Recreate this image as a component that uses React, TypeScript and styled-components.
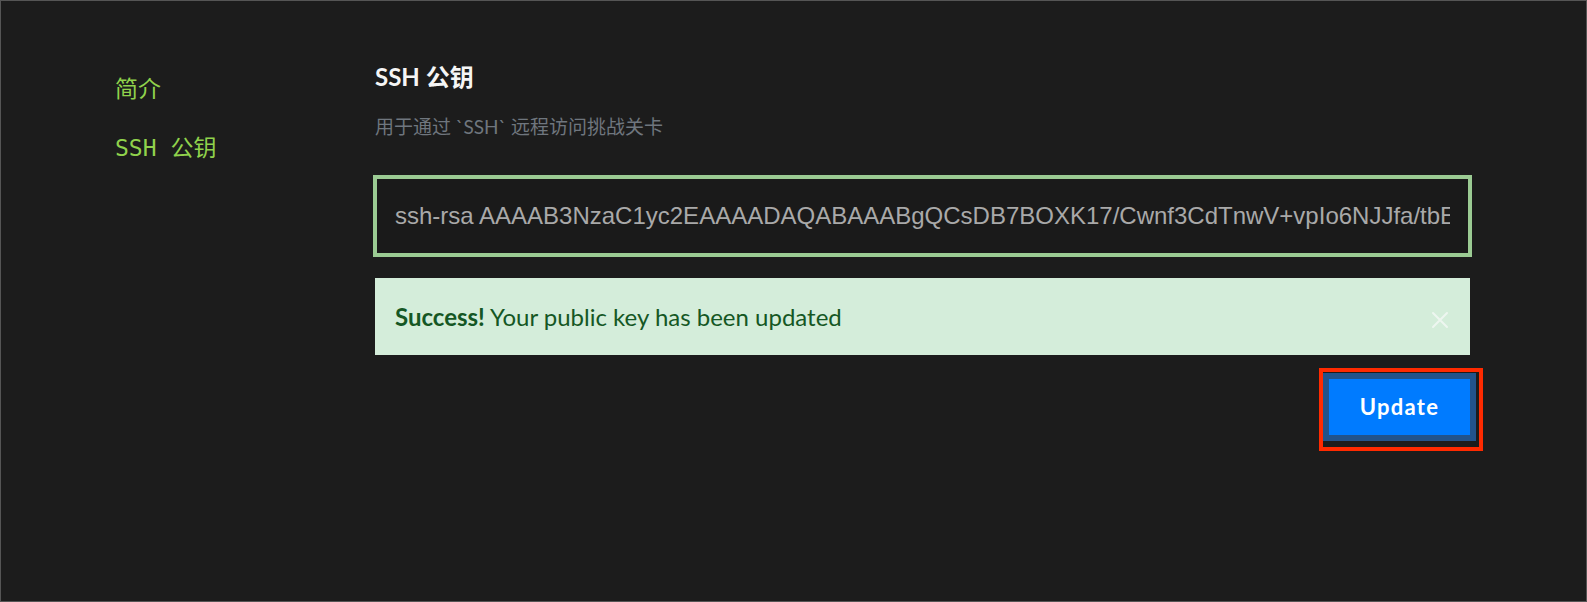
import React from "react";
import styled, { createGlobalStyle } from "styled-components";

const GlobalStyle = createGlobalStyle`
  html, body {
    margin: 0;
    padding: 0;
    background: #1c1c1c;
  }
  #root {
    box-sizing: border-box;
    height: 602px;
    border: 1px solid #555555;
    background: #1c1c1c;
  }
`;

const Page = styled.div`
  display: flex;
  padding: 0 116px 0 114px;
`;

const Sidebar = styled.nav`
  width: 260px;
  flex: none;
  display: flex;
  flex-direction: column;
  gap: 27px;
  padding-top: 69px;
`;

const NavItem = styled.a<{ $mono?: boolean }>`
  display: block;
  color: #90d24c;
  font-size: 23px;
  line-height: 34px;
  text-decoration: none;
  font-family: ${(p) =>
    p.$mono
      ? `"DejaVu Sans Mono", "Noto Sans CJK SC", monospace`
      : `"Noto Sans CJK SC", sans-serif`};
  white-space: pre;
`;

const Content = styled.main`
  flex: 1;
  min-width: 0;
  display: flex;
  flex-direction: column;
  padding-top: 61px;
`;

const Title = styled.h4`
  margin: 0;
  color: #f5f5f5;
  font-family: Lato, "Noto Sans CJK SC", sans-serif;
  font-weight: 700;
  font-size: 24px;
  line-height: 29px;
`;

const Subtitle = styled.p`
  margin: 22px 0 0;
  color: #6f767e;
  font-family: Lato, "Noto Sans CJK SC", sans-serif;
  font-size: 19px;
  line-height: 28px;
`;

const KeyInput = styled.input`
  box-sizing: border-box;
  display: block;
  width: 100%;
  height: 78px;
  margin-top: 36px;
  padding: 0 18px;
  background: #1a1a1a;
  border: 2px solid #9bcb93;
  box-shadow: 0 0 0 2px #9bcb93;
  outline: none;
  color: #a9a9a9;
  font-family: "Liberation Sans", Arial, sans-serif;
  font-size: 24px;
`;

const Alert = styled.div`
  box-sizing: border-box;
  display: flex;
  align-items: center;
  justify-content: space-between;
  height: 77px;
  margin-top: 23px;
  padding: 0 18px 0 20px;
  background: #d4edda;
  color: #155724;
  font-family: Lato, sans-serif;
  font-size: 24px;
`;

const Strong = styled.strong`
  font-weight: 700;
`;

const CloseButton = styled.button`
  display: flex;
  align-items: center;
  justify-content: center;
  width: 24px;
  height: 24px;
  padding: 0;
  margin-top: 6px;
  border: none;
  background: transparent;
`;

const ButtonRow = styled.div`
  display: flex;
  justify-content: flex-end;
  margin-top: 24px;
`;

const ButtonWrap = styled.div`
  position: relative;
`;

const UpdateButton = styled.button`
  display: block;
  width: 141px;
  height: 56px;
  border: none;
  background: #007bff;
  box-shadow: 0 0 0 6px #22538b;
  color: #ffffff;
  font-family: Lato, sans-serif;
  font-weight: 700;
  font-size: 22px;
  letter-spacing: 1.3px;
  padding: 0 0 2px;
`;

const Highlight = styled.div`
  position: absolute;
  top: -11px;
  left: -10px;
  right: -13px;
  bottom: -16px;
  border: 4px solid #ff2a00;
  pointer-events: none;
`;

const KEY =
  "ssh-rsa AAAAB3NzaC1yc2EAAAADAQABAAABgQCsDB7BOXK17/Cwnf3CdTnwV+vpIo6NJJfa/tbEqR8xLm2Zk9WcVd0pYt3Hn5sGfJ7aQe1uXo4iBr6TlNyCz8Mw user@host";

export default function App() {
  return (
    <>
      <GlobalStyle />
      <Page>
        <Sidebar>
          <NavItem>简介</NavItem>
          <NavItem $mono>SSH 公钥</NavItem>
        </Sidebar>
        <Content>
          <Title>SSH 公钥</Title>
          <Subtitle>用于通过 `SSH` 远程访问挑战关卡</Subtitle>
          <KeyInput readOnly value={KEY} />
          <Alert>
            <span>
              <Strong>Success!</Strong> Your public key has been updated
            </span>
            <CloseButton aria-label="Close">
              <svg width="18" height="18" viewBox="0 0 18 18">
                <path
                  d="M2 2 L16 16 M16 2 L2 16"
                  stroke="#eef6f0"
                  strokeWidth="2"
                  strokeLinecap="round"
                />
              </svg>
            </CloseButton>
          </Alert>
          <ButtonRow>
            <ButtonWrap>
              <UpdateButton>Update</UpdateButton>
              <Highlight />
            </ButtonWrap>
          </ButtonRow>
        </Content>
      </Page>
    </>
  );
}
